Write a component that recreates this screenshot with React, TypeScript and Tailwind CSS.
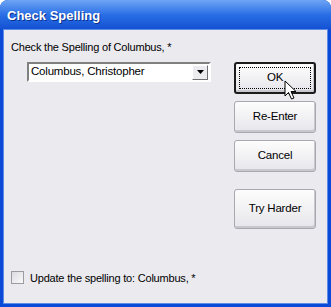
const ui = { fontFamily: '"Liberation Sans", Arial, sans-serif' };

const XpButton = ({ label, focused, tall }: { label: string; focused?: boolean; tall?: boolean }) => {
  return (
    <div
      className={`relative flex w-[82px] items-center justify-center rounded-[3px] border bg-gradient-to-b from-[#fdfdfd] to-[#e6e5ea] text-[11.5px] tracking-[-0.2px] text-black ${
        tall ? "h-[40px]" : "h-[32px]"
      } ${focused ? "border-[#1b1b1b] border-2" : "border-[#a9a8ae]"} shadow-[inset_-1px_-2px_0_#c9c8ce]`}
    >
      {focused && <div className="absolute inset-[3px] border border-dotted border-black" />}
      <span className="relative">{label}</span>
    </div>
  );
};

const Cursor = () => (
  <svg width="14" height="21" viewBox="0 0 14 21" className="absolute left-[284px] top-[80px]">
    <path d="M1 1 L1 16 L4.5 12.5 L7.5 19 L10 18 L7 11.5 L12 11.5 Z" fill="#fff" stroke="#000" strokeWidth="1" strokeLinejoin="miter" />
  </svg>
);

export default function App() {
  return (
    <div className="h-[307px] w-[331px] overflow-hidden bg-white" style={ui}>
      <div className="relative flex h-full w-full flex-col rounded-t-[8px] bg-[#0a4ad6]">
        {/* title bar */}
        <div className="flex h-[29px] items-center rounded-t-[8px] bg-gradient-to-b from-[#6ea4f4] via-[#2a6fe6] to-[#1451d3] px-[7px] pt-[2px]">
          <span className="text-[13px] font-bold text-white [text-shadow:1px_1px_0_#0b2f8a]">Check Spelling</span>
        </div>

        {/* client area */}
        <div className="mx-[3px] mb-[3px] flex flex-1 flex-col border border-[#5d8be6] bg-[#ebeaef] px-[7px] text-[11px] tracking-[-0.2px] text-black">
          <div className="mt-[10px] leading-[14px]">Check the Spelling of Columbus, *</div>

          <div className="flex">
            <div className="flex flex-1 flex-col">
              <div className="ml-[16px] mt-[8px] flex h-[20px] w-[184px] items-center border-2 border-t-[#808080] border-l-[#808080] border-b-[#fff] border-r-[#fff] bg-white">
                <span className="flex-1 pl-[2px] text-[11.5px] leading-none">Columbus, Christopher</span>
                <div className="mr-[1px] flex h-[15px] w-[16px] items-center justify-center border border-t-[#fff] border-l-[#fff] border-b-[#707070] border-r-[#707070] bg-[#ecebf0]">
                  <svg width="7" height="4" viewBox="0 0 7 4">
                    <path d="M0 0 H7 L3.5 4 Z" fill="#000" />
                  </svg>
                </div>
              </div>
            </div>

            <div className="mr-[4px] mt-[8px] flex flex-col gap-[7px]">
              <XpButton label="OK" focused />
              <XpButton label="Re-Enter" />
              <XpButton label="Cancel" />
              <div className="mt-[10px]">
                <XpButton label="Try Harder" tall />
              </div>
            </div>
          </div>

          <div className="mt-auto mb-[17px] flex items-center gap-[6px]">
            <div className="h-[13px] w-[13px] border border-[#9c9ba2] bg-gradient-to-br from-[#dcdbe0] to-[#fafafa]" />
            <span>Update the spelling to: Columbus, *</span>
          </div>
        </div>
        <Cursor />
      </div>
    </div>
  );
}
